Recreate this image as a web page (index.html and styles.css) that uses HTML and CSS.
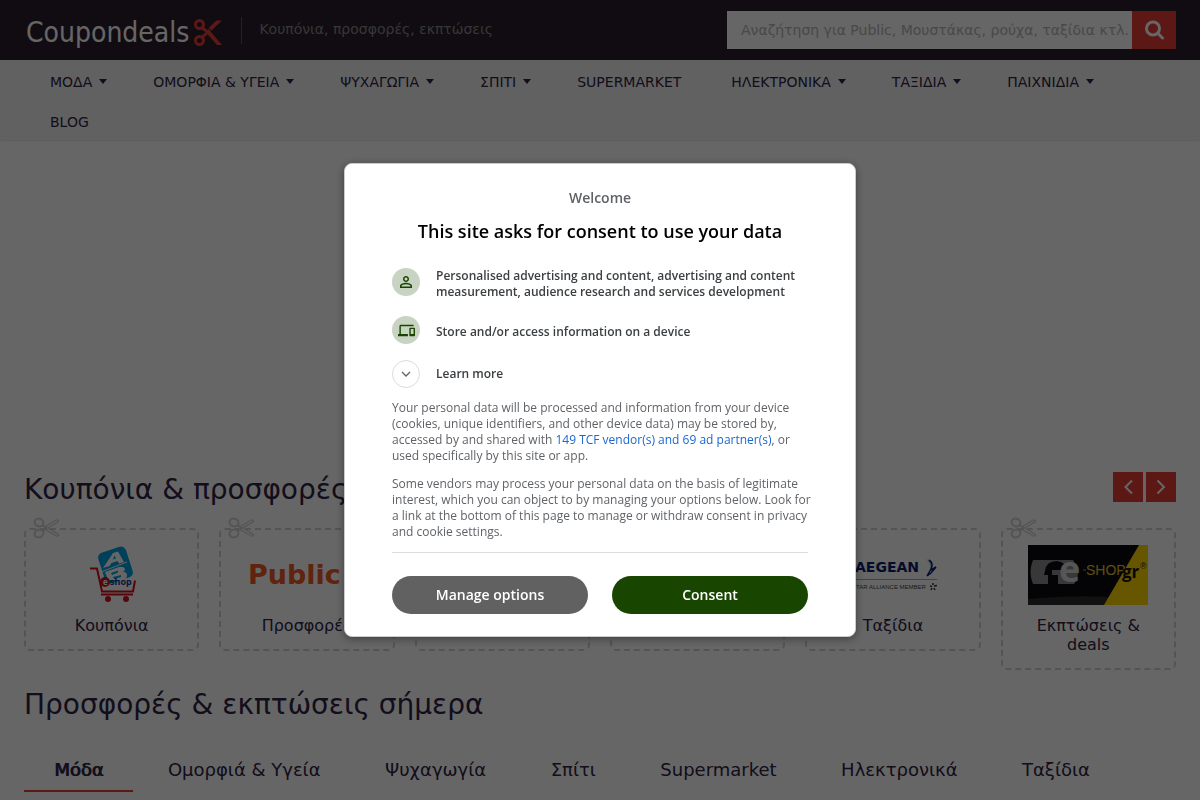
FILE: index.html
```html
<!DOCTYPE html>
<html lang="el">
<head>
    <meta charset="UTF-8">
    <meta name="viewport" content="width=device-width, initial-scale=1.0">
    <title>Coupondeals</title>
    <link rel="stylesheet" href="styles.css">
</head>
<body>
    <svg class="defs" aria-hidden="true">
        <symbol id="scissors" viewBox="0 0 28 22">
            <g fill="none" stroke="#d2d2d4" stroke-width="2">
                <ellipse cx="6" cy="5.500" rx="4.500" ry="3.800" transform="rotate(20 6 5.500)"/>
                <ellipse cx="6" cy="16.500" rx="4.500" ry="3.800" transform="rotate(-20 6 16.500)"/>
                <path d="M9.500 8l4 3-4 3"/>
                <path stroke-width="1.300" d="M13 9l10.500-6c1-.5 2.500.5 2 1.500L15 11l10.500 6.500c.5 1-1 2-2 1.500L13 13z"/>
            </g>
        </symbol>
    </svg>

    <header class="header">
        <a class="logo" href="#">Coupondeals
            <svg width="28" height="27" viewBox="0 0 28 27" fill="none" stroke="#e63c32" stroke-width="3">
                <circle cx="5.500" cy="5.500" r="4"/>
                <circle cx="5.500" cy="21.500" r="4"/>
                <path d="M8 8.500l6 5M8 18.500l6-5.500"/>
                <path fill="#e63c32" stroke="none" d="M22.500 1.500h5.500L17.500 11.500l-3-2.500zM11 12.500l3.500-2.500L28 26h-5z"/>
            </svg>
        </a>
        <span class="tagline">Κουπόνια, προσφορές, εκπτώσεις</span>
        <form class="search">
            <input type="text" aria-label="Αναζήτηση" placeholder="Αναζήτηση για Public, Μουστάκας, ρούχα, ταξίδια κτλ.">
            <button type="button" aria-label="Αναζήτηση">
                <svg width="20" height="20" viewBox="0 0 20 20" fill="none" stroke="#fff" stroke-width="3">
                    <circle cx="9" cy="8.500" r="6.500"/>
                    <path stroke-linecap="round" d="M14 13.500l4.500 4.500"/>
                </svg>
            </button>
        </form>
    </header>

    <nav class="menu">
        <a class="has-sub" href="#">ΜΟΔΑ</a>
        <a class="has-sub" href="#">ΟΜΟΡΦΙΑ &amp; ΥΓΕΙΑ</a>
        <a class="has-sub" href="#">ΨΥΧΑΓΩΓΙΑ</a>
        <a class="has-sub" href="#">ΣΠΙΤΙ</a>
        <a href="#">SUPERMARKET</a>
        <a class="has-sub" href="#">ΗΛΕΚΤΡΟΝΙΚΑ</a>
        <a class="has-sub" href="#">ΤΑΞΙΔΙΑ</a>
        <a class="has-sub" href="#">ΠΑΙΧΝΙΔΙΑ</a>
        <a href="#">BLOG</a>
    </nav>

    <main class="content">
        <div class="banner"></div>

        <div class="section-head">
            <h2>Κουπόνια &amp; προσφορές</h2>
            <div class="arrows">
                <button type="button" aria-label="Προηγούμενο">
                    <svg width="10" height="16" viewBox="0 0 10 16" fill="none" stroke="#fff" stroke-width="2"><path d="M9 1.500L2.500 8 9 14.500"/></svg>
                </button>
                <button type="button" aria-label="Επόμενο">
                    <svg width="10" height="16" viewBox="0 0 10 16" fill="none" stroke="#fff" stroke-width="2"><path d="M1.500 1.500L8 8l-6.500 6.500"/></svg>
                </button>
            </div>
        </div>

        <div class="coupons">
            <a class="coupon" href="#">
                <svg class="cut"><use href="#scissors"/></svg>
                <svg class="brand" viewBox="0 0 120 60">
                    <rect x="49" y="4" width="29" height="32" rx="5" fill="#00a0e0" transform="rotate(-18 63.500 20)"/>
                    <path fill="#fff" fill-rule="evenodd" d="M51 23l10-15 5-1.500L72 17l-5 1.500-1.500-2.500-6 2-2 3zM61 14.500l3-1-1.500-3z"/>
                    <path stroke="#fff" d="M49 27l26-10"/>
                    <path fill="#fff" fill-rule="evenodd" d="M53 27l14-5q5-1 6 2 0 2-2 3 4 0 4 3 0 5-5 5H56zM59 28l7-2.500v2L60 30zM61 32l8-2v2l-7 2z"/>
                    <path fill="none" stroke="#d5101c" stroke-width="2" d="M38 23.500h7l5 23h31l2-11M49 49.500h32"/>
                    <circle cx="56" cy="54" r="3" fill="#d5101c"/>
                    <circle cx="74" cy="54" r="3" fill="#d5101c"/>
                    <circle cx="53" cy="37" r="5" fill="#d5101c"/>
                    <text class="brand-bold" x="51" y="40" font-size="8" fill="#fff">e</text>
                    <text class="brand-bold" x="58" y="40" font-size="9" fill="#123c8c">shop</text>
                </svg>
                <span>Κουπόνια</span>
            </a>
            <a class="coupon" href="#">
                <svg class="cut"><use href="#scissors"/></svg>
                <svg class="brand" viewBox="0 0 120 60">
                    <text class="brand-wide" x="1" y="39" font-size="27" fill="#f15a24">Public</text>
                </svg>
                <span>Προσφορές</span>
            </a>
            <a class="coupon" href="#" aria-label="Κουπόνια">
                <svg class="cut"><use href="#scissors"/></svg>
            </a>
            <a class="coupon" href="#" aria-label="Προσφορές">
                <svg class="cut"><use href="#scissors"/></svg>
            </a>
            <a class="coupon" href="#">
                <svg class="cut"><use href="#scissors"/></svg>
                <svg class="brand" viewBox="0 0 120 60">
                    <text class="brand-wide" x="22" y="27" font-size="14" fill="#0c1e70">AEGEAN</text>
                    <path d="M93 14c5 4 6 8 3 13 5-4 5-9-3-13z" fill="#7fa0cf"/>
                    <path fill="none" stroke="#0c1e70" stroke-width="1.500" d="M96 15q5 3 2 9l-4 7M98 25l5-3-5 6-4 3"/>
                    <path d="M5 34.500h99" stroke="#a8a8a8"/>
                    <text x="19" y="44" font-size="6" fill="#444" class="brand-small">STAR ALLIANCE MEMBER</text>
                    <path d="M100 38v2M97 41l2 .5M101 41l3-.5M98 45l1-2M102 45l-1-2" stroke="#333" stroke-width="1.500"/>
                </svg>
                <span>Ταξίδια</span>
            </a>
            <a class="coupon" href="#">
                <svg class="cut"><use href="#scissors"/></svg>
                <svg class="brand" viewBox="0 0 120 60">
                    <path fill="#0c0c10" d="M0 0h120v60H0z"/>
                    <path fill="#2b2b2e" d="M0 54q60-5 88-1l-8 7H0z"/>
                    <path fill="#ffd800" d="M111 0h9v60H76z"/>
                    <path fill="#8c8c8c" d="M5 15h40q4 6 5 12 0 7-4 12H5Q0 27 5 15z"/>
                    <path fill="#0c0c10" d="M17 26q1-10 12-10 9 1 9 9H24v5h6v9H20v-9h-4z"/>
                    <text class="brand-bold" x="31" y="37" font-size="36" fill="#d8d8d8">e</text>
                    <path stroke="#8c8c8c" d="M55 25h3"/>
                    <text class="brand-small" x="58" y="30" font-size="14" fill="#e4c32c">SHOP</text>
                    <text class="brand-bold" x="94" y="33" font-size="17" fill="#111">gr</text>
                    <text class="brand-small" x="112" y="24" font-size="9" fill="#222">®</text>
                </svg>
                <span>Εκπτώσεις &amp; deals</span>
            </a>
        </div>

        <h2>Προσφορές &amp; εκπτώσεις σήμερα</h2>
        <div class="tabs">
            <a class="active" href="#">Μόδα</a>
            <a href="#">Ομορφιά &amp; Υγεία</a>
            <a href="#">Ψυχαγωγία</a>
            <a href="#">Σπίτι</a>
            <a href="#">Supermarket</a>
            <a href="#">Ηλεκτρονικά</a>
            <a href="#">Ταξίδια</a>
        </div>
    </main>

    <div class="overlay">
        <div class="dialog" role="dialog" aria-modal="true" aria-labelledby="consent-title" lang="en">
            <p class="welcome">Welcome</p>
            <h1 id="consent-title">This site asks for consent to use your data</h1>
            <ul class="purposes">
                <li>
                    <span class="icon">
                        <svg width="18" height="18" viewBox="0 0 24 24" fill="#184500"><path d="M12 5.900c1.160 0 2.100.94 2.100 2.100s-.94 2.100-2.100 2.100S9.900 9.160 9.900 8s.94-2.100 2.100-2.100m0 9c2.970 0 6.100 1.460 6.100 2.100v1.100H5.900V17c0-.64 3.130-2.100 6.100-2.100M12 4C9.790 4 8 5.790 8 8s1.790 4 4 4 4-1.790 4-4-1.790-4-4-4zm0 9c-2.670 0-8 1.340-8 4v3h16v-3c0-2.660-5.330-4-8-4z"/></svg>
                    </span>
                    <span>Personalised advertising and content, advertising and content measurement, audience research and services development</span>
                </li>
                <li>
                    <span class="icon">
                        <svg width="17" height="17" viewBox="0 0 24 24" fill="#184500"><path d="M4 6h18V4H4c-1.100 0-2 .9-2 2v11H0v3h14v-3H4V6zm19 2h-6c-.55 0-1 .45-1 1v10c0 .55.450 1 1 1h6c.55 0 1-.45 1-1V9c0-.55-.45-1-1-1zm-1 9h-4v-7h4v7z"/></svg>
                    </span>
                    <span>Store and/or access information on a device</span>
                </li>
            </ul>
            <button class="learn-more" type="button">
                <span class="icon">
                    <svg width="10" height="6" viewBox="0 0 10 6" fill="none" stroke="#5f6368" stroke-width="1.300"><path d="M1 1l4 4 4-4"/></svg>
                </span>
                Learn more
            </button>
            <p>Your personal data will be processed and information from your device (cookies, unique identifiers, and other device data) may be stored by, accessed by and shared with <a href="#">149 TCF vendor(s) and 69 ad partner(s)</a>, or used specifically by this site or app.</p>
            <p>Some vendors may process your personal data on the basis of legitimate interest, which you can object to by managing your options below. Look for a link at the bottom of this page to manage or withdraw consent in privacy and cookie settings.</p>
            <div class="actions">
                <button class="manage" type="button">Manage options</button>
                <button class="consent" type="button">Consent</button>
            </div>
        </div>
    </div>
</body>
</html>
```

FILE: styles.css
```css
* {
    box-sizing: border-box;
}
body {
    margin: 0;
    height: 100vh;
    overflow: hidden;
    background-color: #fff;
    color: #2f2345;
    font-family: "DejaVu Sans", sans-serif;
    font-size: 14px;
}
a {
    color: inherit;
    text-decoration: none;
}
button {
    padding: 0;
    border: 0;
    cursor: pointer;
}
h2 {
    margin: 0;
    font-size: 28px;
    font-weight: normal;
    line-height: 36px;
}
.defs {
    display: none;
}

/* header */
.header {
    display: flex;
    align-items: center;
    height: 60px;
    padding: 0 24px 0 26px;
    background-color: #2b1e2d;
}
.logo {
    display: flex;
    align-items: center;
    gap: 5px;
    color: #fff;
    font-family: "DejaVu Sans Condensed", "DejaVu Sans", sans-serif;
    font-size: 28px;
    padding: 4px 0 0;
}
.tagline {
    margin-left: 19px;
    padding: 5px 0 7px 17px;
    border-left: 1px solid #5c4f5e;
    color: #888;
    line-height: 15px;
}
.search {
    display: flex;
    margin-left: auto;
}
.search input {
    width: 405px;
    height: 38px;
    padding: 0 0 0 14px;
    border: 0;
    background-color: #fff;
    font: inherit;
}
.search input::placeholder {
    color: #b4b4b4;
}
.search button {
    display: flex;
    align-items: center;
    justify-content: center;
    width: 44px;
    background-color: #e63c32;
}

/* menu */
.menu {
    display: flex;
    flex-wrap: wrap;
    padding: 0 25px;
    background-color: #f2f2f2;
    box-shadow: 0 1px 2px rgba(0,0,0,0.1);
}
.menu a {
    margin-bottom: -2px;
    padding: 2px 25px 0;
    line-height: 40px;
}
.menu .has-sub {
    padding-right: 21px;
}
.menu .has-sub::after {
    content: "";
    display: inline-block;
    margin-left: 7px;
    border: 4px solid transparent;
    border-top: 5px solid #2f2345;
    border-bottom: 0;
    vertical-align: 3px;
}

/* content */
.content {
    padding: 0 24px;
}
.banner {
    height: 332px;
}
.section-head {
    display: flex;
    justify-content: space-between;
    margin-bottom: 20px;
}
.arrows {
    display: flex;
    gap: 3px;
}
.arrows button {
    display: flex;
    align-items: center;
    justify-content: center;
    width: 30px;
    height: 30px;
    background-color: #e63c32;
}
.coupons {
    display: grid;
    grid-template-columns: repeat(6, 1fr);
    align-items: start;
    gap: 20px;
    margin-bottom: 17px;
}
.coupon {
    position: relative;
    display: flex;
    flex-direction: column;
    align-items: center;
    min-height: 123px;
    padding: 15px 20px 14px;
    border: 2px dashed #d2d2d4;
    border-radius: 6px;
    font-size: 16px;
    line-height: 19px;
    text-align: center;
}
.cut {
    position: absolute;
    top: -13px;
    left: 7px;
    width: 28px;
    height: 22px;
}
.brand {
    width: 120px;
    height: 60px;
    margin-bottom: 11px;
}
.brand-bold {
    font-family: "Open Sans", sans-serif;
    font-weight: bold;
}
.brand-wide {
    font-family: "DejaVu Sans", sans-serif;
    font-weight: bold;
}
.brand-small {
    font-family: "Liberation Sans", sans-serif;
}
.tabs {
    margin-top: 27px;
    white-space: nowrap;
}
.tabs a {
    display: inline-block;
    padding: 0 30px;
    border-bottom: 2px solid transparent;
    font-size: 18px;
    line-height: 40px;
}
/* shadow instead of bold, so the tab keeps its width */
.tabs .active {
    border-color: #e63c32;
    text-shadow: 1px 0 0 #2f2345;
}

/* consent dialog */
.overlay {
    position: fixed;
    inset: 0;
    display: flex;
    align-items: center;
    justify-content: center;
    background-color: rgba(0,0,0,0.6);
}
.dialog {
    width: 512px;
    padding: 24px 47px 22px;
    border: 1px solid #ccc;
    border-radius: 8px;
    background-color: #fff;
    box-shadow: 0 2px 8px rgba(0,0,0,0.4);
    color: #5f6368;
    font-family: "Open Sans", sans-serif;
    font-size: 12px;
    line-height: 16px;
    text-rendering: optimizeSpeed;
}
.dialog p {
    margin: 0 -8px 12px 0;
}
.dialog .welcome {
    margin: 0;
    font-size: 14px;
    font-weight: 600;
    line-height: 20px;
    text-align: center;
}
.dialog h1 {
    margin: 11px 0 25px;
    color: #000;
    font-size: 18px;
    font-weight: 600;
    line-height: 24px;
    text-align: center;
}
.dialog p a {
    color: #1967d2;
}
.purposes {
    display: flex;
    flex-direction: column;
    gap: 16px;
    margin: 0 0 12px;
    padding: 0;
    list-style: none;
}
.purposes li {
    display: grid;
    grid-template-columns: 28px 1fr;
    align-items: center;
    gap: 16px;
    min-height: 32px;
    color: #3c4043;
    font-weight: 600;
}
.icon {
    display: flex;
    align-items: center;
    justify-content: center;
    align-self: start;
    width: 28px;
    height: 28px;
    border-radius: 50%;
    background-color: #c8d3c2;
}
.learn-more {
    display: flex;
    align-items: center;
    gap: 16px;
    margin-bottom: 12px;
    background: none;
    color: #3c4043;
    font: inherit;
    font-weight: 600;
}
.learn-more .icon {
    border: 1px solid #dadce0;
    background: none;
}
.actions {
    display: flex;
    gap: 24px;
    padding-top: 23px;
    border-top: 1px solid #dadce0;
}
.actions button {
    flex: 1;
    height: 38px;
    border-radius: 19px;
    background-color: #616161;
    color: #fff;
    font: inherit;
    font-size: 14px;
    font-weight: 600;
}
.actions .consent {
    background-color: #184500;
}
```
